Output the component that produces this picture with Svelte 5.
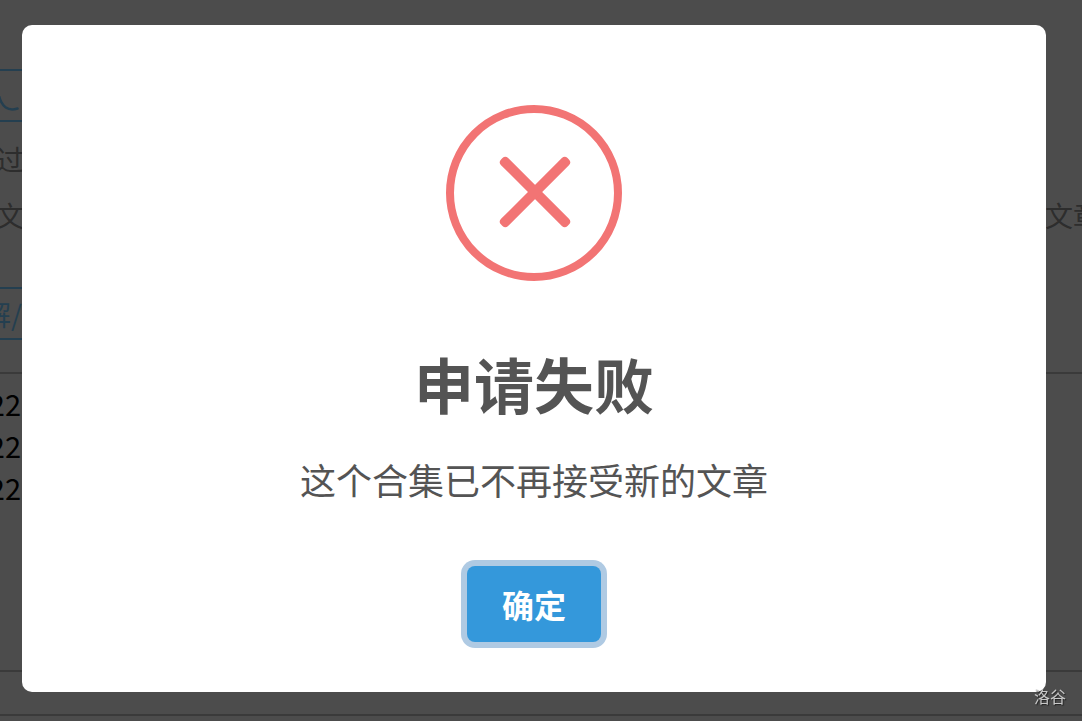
<script>
    // Dialog content
    let dialog = {
        title: '申请失败',
        text: '这个合集已不再接受新的文章',
        confirmText: '确定'
    };

    let open = true;
    let rows = ['22', '22', '22'];

    function confirm() {
        open = false;
    }
</script>

<div class="page">
    <div class="box">
        <svg class="curve" viewBox="0 0 22 20" width="22" height="20" aria-hidden="true">
            <path d="M-1 0C2 11 8 15.500 17.500 12.500" />
        </svg>
    </div>
    <p class="line first"><span>过</span></p>
    <p class="line second"><span>文</span><span>文章</span></p>
    <div class="box tag"><span>解/</span></div>
    <ul class="rows">
        {#each rows as row}
            <li>{row}</li>
        {/each}
    </ul>
    <div class="footer"></div>
</div>

{#if open}
    <div class="overlay">
        <div class="modal" role="dialog" aria-modal="true" aria-labelledby="dialog-title">
            <svg class="icon" viewBox="0 0 176 176" width="176" height="176" aria-hidden="true">
                <circle cx="88" cy="88" r="84" />
                <rect x="42" y="82" width="94" height="10" rx="4" transform="rotate(45 89 87)" />
                <rect x="42" y="82" width="94" height="10" rx="4" transform="rotate(-45 89 87)" />
            </svg>
            <h2 id="dialog-title">{dialog.title}</h2>
            <p class="text">{dialog.text}</p>
            <button type="button" on:click={confirm}>{dialog.confirmText}</button>
        </div>
    </div>
{/if}

<div class="watermark">洛谷</div>

<style>
    :global(body) {
        background: #fff;
        font-family: "Noto Sans CJK SC", sans-serif;
    }
    .page {
        box-sizing: border-box;
        height: 100vh;
        padding-top: 69px;
        overflow: hidden;
        background: #4c4c4c;
        color: #2d2d2d;
        font-size: 28px;
        line-height: 42px;
    }
    .box {
        box-sizing: border-box;
        width: 22px;
        height: 53px;
        border: solid #243f50;
        border-width: 2px 0;
        color: #243f50;
        overflow: hidden;
    }
    .curve {
        display: block;
        margin-top: 25px;
    }
    .curve path {
        fill: none;
        stroke: #243f50;
        stroke-width: 2.5;
        stroke-linecap: round;
    }
    .line {
        display: flex;
        justify-content: space-between;
        margin: 16px -19px 0 -4px;
        white-space: nowrap;
    }
    .line.second {
        margin-top: 14px;
    }
    .tag {
        display: flex;
        justify-content: flex-end;
        align-items: center;
        margin-top: 51px;
        line-height: 40px;
    }
    .rows {
        list-style: none;
        box-sizing: border-box;
        height: 300px;
        margin: 32px 0 0;
        padding: 8px 0 0;
        border: solid #3a3a3a;
        border-width: 2px 0;
        color: #000;
        font-size: 29px;
    }
    .rows li {
        display: flex;
        justify-content: flex-end;
        width: 21px;
    }
    .footer {
        height: 42px;
        border-bottom: 2px solid #3a3a3a;
    }
    .overlay {
        position: fixed;
        inset: 0;
        padding: 25px 36px 29px 22px;
        overflow: hidden;
    }
    .modal {
        display: flex;
        flex-direction: column;
        align-items: center;
        padding: 80px 40px 50px;
        border-radius: 10px;
        background: #fff;
        color: #545454;
    }
    .icon {
        display: block;
        flex: none;
    }
    .icon circle {
        fill: none;
        stroke: #f27474;
        stroke-width: 8;
    }
    .icon rect {
        fill: #f27474;
    }
    h2 {
        margin: 57px 0 0;
        font-size: 60px;
        font-weight: 700;
        line-height: 90px;
    }
    .text {
        margin: 24px 0 0;
        font-size: 36px;
        line-height: 54px;
    }
    button {
        margin: 60px 0 0;
        padding: 14px 35px;
        border: 0;
        border-radius: 8px;
        background: #3498db;
        box-shadow: 0 0 0 6px #afcae3;
        color: #fff;
        font-family: inherit;
        font-size: 32px;
        font-weight: 700;
        line-height: 48px;
        cursor: pointer;
    }
    .watermark {
        position: fixed;
        right: 16px;
        bottom: 13px;
        color: #c8c8c8;
        font-size: 16px;
        line-height: 24px;
        text-shadow: 1px 1px 1px #222;
    }
</style>
